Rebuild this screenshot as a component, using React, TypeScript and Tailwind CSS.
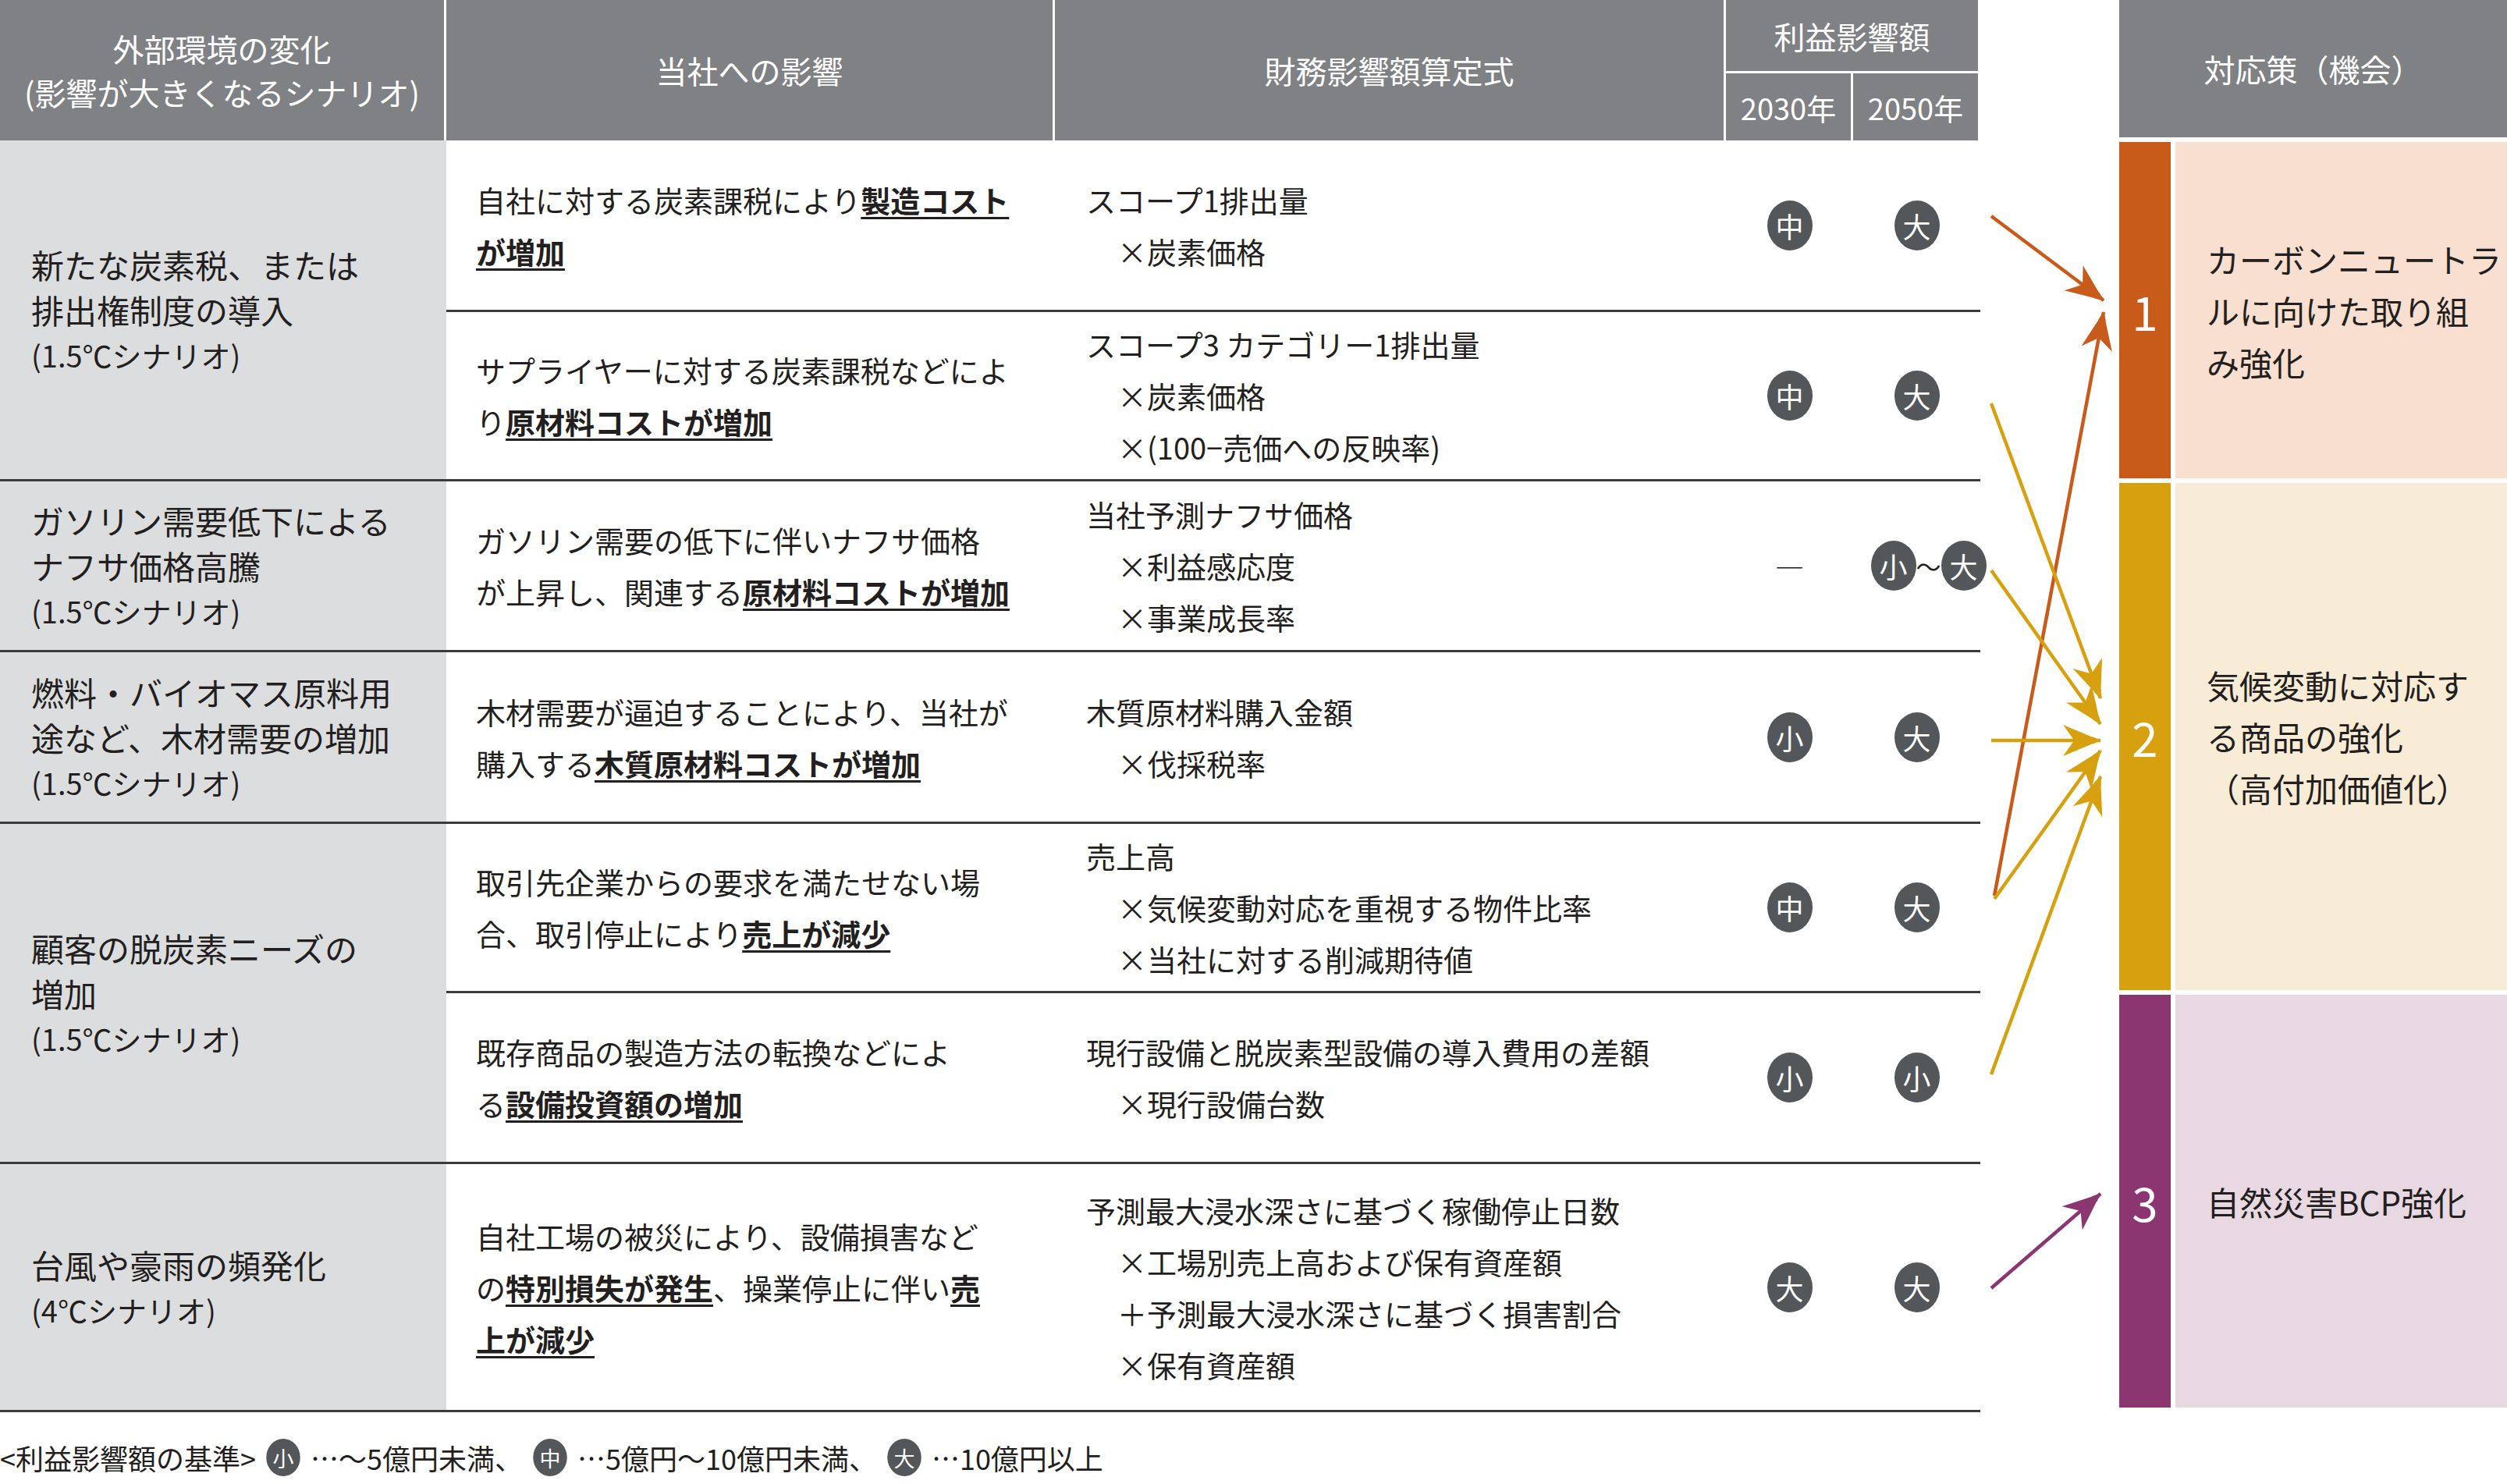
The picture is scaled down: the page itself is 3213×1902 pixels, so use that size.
import React from "react";

const F = { fontFamily: '"Noto Sans CJK JP", "Noto Sans", sans-serif' };

function C({ t }: { t: string }) {
  return (
    <span className="inline-flex items-center justify-center w-[58px] h-[64px] rounded-[50%] bg-[#54575a] text-white text-[36px] leading-none">
      {t}
    </span>
  );
}

const line = "border-b-[3px] border-[#3b3b3b]";
const hd = "bg-[#808184] text-white flex items-center justify-center text-center border-r-[3px] border-white";

function Col2({ children }: { children: React.ReactNode }) {
  return <div className={`${line} flex items-center pl-[38px] text-[38px] leading-[66px] text-[#231f20]`}>{children}</div>;
}
function Col3({ lines }: { lines: string[] }) {
  return (
    <div className={`${line} flex flex-col justify-center pl-[40px] text-[38px] leading-[66px] text-[#231f20] whitespace-nowrap`}>
      {lines.map((l, i) => (
        <div key={i} className={i > 0 ? "pl-[40px]" : ""}>{l}</div>
      ))}
    </div>
  );
}
function Imp({ a, b }: { a: React.ReactNode; b: React.ReactNode }) {
  return (
    <>
      <div className={`${line} flex items-center justify-center`}>{a}</div>
      <div className={`${line} flex items-center justify-center`}>{b}</div>
    </>
  );
}
const B = ({ children }: { children: React.ReactNode }) => (
  <b className="underline decoration-[3px] underline-offset-[6px] font-bold">{children}</b>
);
function Col1({ l, s, span }: { l: string[]; s: string; span: string }) {
  return (
    <div className={`${line} ${span} bg-[#dcdddf] flex flex-col justify-center pl-[40px] text-[42px] leading-[58px] text-[#231f20] whitespace-nowrap`}>
      {l.map((x) => <div key={x}>{x}</div>)}
      <div className="text-[38px]">{s}</div>
    </div>
  );
}

function Arrows() {
  const arr = [
    { x1: 14, y1: 277, x2: 158, y2: 385, c: "#c85a1a" },
    { x1: 18, y1: 1148, x2: 158, y2: 400, c: "#c85a1a" },
    { x1: 14, y1: 517, x2: 154, y2: 895, c: "#d6a00e" },
    { x1: 14, y1: 731, x2: 154, y2: 928, c: "#d6a00e" },
    { x1: 14, y1: 949, x2: 154, y2: 949, c: "#d6a00e" },
    { x1: 18, y1: 1152, x2: 154, y2: 962, c: "#d6a00e" },
    { x1: 14, y1: 1377, x2: 154, y2: 995, c: "#d6a00e" },
    { x1: 14, y1: 1651, x2: 154, y2: 1530, c: "#8b3670" },
  ];
  return (
    <svg width="178" height="1902" className="block">
      <defs>
        {["c85a1a", "d6a00e", "8b3670"].map((c) => (
          <marker key={c} id={"m" + c} markerWidth="12" markerHeight="10" refX="11" refY="5" orient="auto" markerUnits="userSpaceOnUse" viewBox="0 0 12 10">
            <path d="M0 0 L12 5 L0 10 L3 5 Z" fill={"#" + c} />
          </marker>
        ))}
      </defs>
      {arr.map((a, i) => (
        <line key={i} x1={a.x1} y1={a.y1} x2={a.x2} y2={a.y2} stroke={a.c} strokeWidth="4.5" markerEnd={`url(#m${a.c.slice(1)})`} style={{}} />
      ))}
      {arr.map((a, i) => {
        const ang = Math.atan2(a.y2 - a.y1, a.x2 - a.x1);
        const L = 48, W = 20;
        const bx = a.x2 - L * Math.cos(ang), by = a.y2 - L * Math.sin(ang);
        const nx = -Math.sin(ang) * W, ny = Math.cos(ang) * W;
        const mx = a.x2 - L * 0.7 * Math.cos(ang), my = a.y2 - L * 0.7 * Math.sin(ang);
        return <path key={"h" + i} d={`M${a.x2} ${a.y2} L${bx + nx} ${by + ny} L${mx} ${my} L${bx - nx} ${by - ny} Z`} fill={a.c} />;
      })}
    </svg>
  );
}

export default function App() {
  return (
    <div className="w-[3213px] h-[1902px] bg-white relative" style={F}>
      <div className="flex">
        <div className="w-[2538px] shrink-0">
          <div className="grid grid-cols-[572px_780px_860px_163px_163px] grid-rows-[94px_86px_220px_217px_219px_220px_217px_219px_318px]">
            <div className={`${hd} row-span-2 text-[40px] leading-[56px] flex-col`}>
              <div>外部環境の変化</div>
              <div>(影響が大きくなるシナリオ)</div>
            </div>
            <div className={`${hd} row-span-2 text-[40px]`}>当社への影響</div>
            <div className={`${hd} row-span-2 text-[40px]`}>財務影響額算定式</div>
            <div className={`${hd} col-span-2 border-b-[3px] text-[40px]`}>利益影響額</div>
            <div className={`${hd} text-[38px]`}>2030年</div>
            <div className={`${hd} text-[38px] border-r-0`}>2050年</div>

            <Col1 span="row-span-2" l={["新たな炭素税、または", "排出権制度の導入"]} s="(1.5℃シナリオ)" />
            <Col2><div>自社に対する炭素課税により<B>製造コスト</B><br /><B>が増加</B></div></Col2>
            <Col3 lines={["スコープ1排出量", "×炭素価格"]} />
            <Imp a={<C t="中" />} b={<C t="大" />} />
            <Col2><div>サプライヤーに対する炭素課税などによ<br />り<B>原材料コストが増加</B></div></Col2>
            <Col3 lines={["スコープ3 カテゴリー1排出量", "×炭素価格", "×(100−売価への反映率)"]} />
            <Imp a={<C t="中" />} b={<C t="大" />} />

            <Col1 span="" l={["ガソリン需要低下による", "ナフサ価格高騰"]} s="(1.5℃シナリオ)" />
            <Col2><div>ガソリン需要の低下に伴いナフサ価格<br />が上昇し、関連する<B>原材料コストが増加</B></div></Col2>
            <Col3 lines={["当社予測ナフサ価格", "×利益感応度", "×事業成長率"]} />
            <Imp
              a={<span className="text-[38px] text-[#231f20]">―</span>}
              b={<span className="flex items-center text-[32px] text-[#231f20] ml-[30px]"><C t="小" />～<C t="大" /></span>}
            />

            <Col1 span="" l={["燃料・バイオマス原料用", "途など、木材需要の増加"]} s="(1.5℃シナリオ)" />
            <Col2><div>木材需要が逼迫することにより、当社が<br />購入する<B>木質原材料コストが増加</B></div></Col2>
            <Col3 lines={["木質原材料購入金額", "×伐採税率"]} />
            <Imp a={<C t="小" />} b={<C t="大" />} />

            <Col1 span="row-span-2" l={["顧客の脱炭素ニーズの", "増加"]} s="(1.5℃シナリオ)" />
            <Col2><div>取引先企業からの要求を満たせない場<br />合、取引停止により<B>売上が減少</B></div></Col2>
            <Col3 lines={["売上高", "×気候変動対応を重視する物件比率", "×当社に対する削減期待値"]} />
            <Imp a={<C t="中" />} b={<C t="大" />} />
            <Col2><div>既存商品の製造方法の転換などによ<br />る<B>設備投資額の増加</B></div></Col2>
            <Col3 lines={["現行設備と脱炭素型設備の導入費用の差額", "×現行設備台数"]} />
            <Imp a={<C t="小" />} b={<C t="小" />} />

            <Col1 span="" l={["台風や豪雨の頻発化"]} s="(4℃シナリオ)" />
            <Col2><div>自社工場の被災により、設備損害など<br />の<B>特別損失が発生</B>、操業停止に伴い<B>売</B><br /><B>上が減少</B></div></Col2>
            <Col3 lines={["予測最大浸水深さに基づく稼働停止日数", "×工場別売上高および保有資産額", "＋予測最大浸水深さに基づく損害割合", "×保有資産額"]} />
            <Imp a={<C t="大" />} b={<C t="大" />} />
          </div>
          <div className="mt-[26px] flex items-center text-[36px] text-[#231f20] whitespace-nowrap gap-[6px]">
            <span>&lt;利益影響額の基準&gt;</span>
            <span className="scale-[0.75] inline-flex"><C t="小" /></span>
            <span>…～5億円未満、</span>
            <span className="scale-[0.75] inline-flex"><C t="中" /></span>
            <span>…5億円～10億円未満、</span>
            <span className="scale-[0.75] inline-flex"><C t="大" /></span>
            <span>…10億円以上</span>
          </div>
        </div>
        <div className="w-[178px] shrink-0"><Arrows /></div>
        <div className="flex-1 flex flex-col gap-[6px]">
          <div className="h-[176px] bg-[#808184] text-white text-[40px] flex items-center justify-center">対応策（機会）</div>
          {[
            { n: "1", h: "h-[431px]", a: "bg-[#c85a1a]", b: "bg-[#f8dfcf]", t: ["カーボンニュートラ", "ルに向けた取り組", "み強化"] },
            { n: "2", h: "h-[650px]", a: "bg-[#d6a00e]", b: "bg-[#f9ecd6]", t: ["気候変動に対応す", "る商品の強化", "（高付加価値化）"] },
            { n: "3", h: "h-[529px]", a: "bg-[#8b3670]", b: "bg-[#e8d8e2]", t: ["自然災害BCP強化"] },
          ].map((r) => (
            <div key={r.n} className={`${r.h} flex gap-[6px]`}>
              <div className={`${r.a} w-[66px] flex items-center justify-center text-white text-[60px]`}>{r.n}</div>
              <div className={`${r.b} flex-1 flex flex-col justify-center pl-[40px] text-[42px] leading-[66px] text-[#231f20] whitespace-nowrap`}>
                {r.t.map((x) => <div key={x}>{x}</div>)}
              </div>
            </div>
          ))}
        </div>
      </div>
    </div>
  );
}
